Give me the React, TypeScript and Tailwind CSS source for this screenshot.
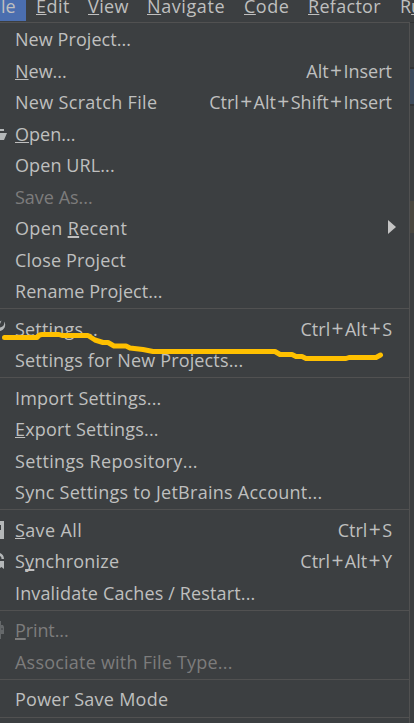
import { Fragment, type ReactNode } from "react";

type Item = {
  label: string;
  mnemonic?: number;
  shortcut?: string;
  disabled?: boolean;
  submenu?: boolean;
  icon?: ReactNode;
  tracking?: string;
  thick?: boolean;
  raised?: boolean;
};

const FolderIcon = () => (
  <svg width="8" height="16" viewBox="0 0 8 16" fill="#b4b7b8">
    <path d="M0 3h4v2H0zM0 7h7l-3 7H0z" />
  </svg>
);
const WrenchIcon = () => (
  <svg className="-mt-[4px]" width="8" height="18" viewBox="0 0 8 18" fill="#b4b7b8">
    <path d="M4.300 3.500C6.500 7.500 4.500 12 0 13V9.500L1.500 9C3.500 8.500 4.500 6.500 4.300 3.500zM0 3.500L1.500 2.500L0 6z" />
  </svg>
);
const SaveIcon = () => (
  <svg width="8" height="18" viewBox="0 0 8 18" fill="#b4b7b8">
    <path d="M0 0h4v18H0V9h1V4H0z" />
  </svg>
);
const SyncIcon = () => (
  <svg width="8" height="18" viewBox="0 0 8 18" fill="#b4b7b8">
    <path d="M0 1C2.500 2 4 4 4 7H1.500C1.500 5 1 4.500 0 4zM0 9h4v8l-2.500-2L0 16z" />
  </svg>
);
const PrintIcon = () => (
  <svg width="8" height="18" viewBox="0 0 8 18" fill="#65686a">
    <path d="M0 0h1v4h2l1 2v7H1v5H0z" />
    <path d="M1.500 7h1v2h-1z" fill="#3c3f41" />
  </svg>
);

const groups: Item[][] = [
  [
    { label: "New Project...", raised: true, tracking: "tracking-[0.07px]" },
    { label: "New...", mnemonic: 0, shortcut: "Alt+Insert" },
    { label: "New Scratch File", raised: true, shortcut: "Ctrl+Alt+Shift+Insert", tracking: "tracking-[0.31px]" },
    { label: "Open...", mnemonic: 0, icon: <FolderIcon /> },
    { label: "Open URL...", tracking: "tracking-[0.1px]" },
    { label: "Save As...", disabled: true },
    { label: "Open Recent", mnemonic: 5, submenu: true, thick: true, tracking: "tracking-[0.36px]" },
    { label: "Close Project", tracking: "tracking-[0.15px]" },
    { label: "Rename Project...", tracking: "tracking-[0.06px]" },
  ],
  [
    { label: "Settings...", shortcut: "Ctrl+Alt+S", icon: <WrenchIcon />, tracking: "tracking-[0.18px]" },
    { label: "Settings for New Projects...", tracking: "tracking-[0.15px]" },
  ],
  [
    { label: "Import Settings...", tracking: "tracking-[0.2px]" },
    { label: "Export Settings...", mnemonic: 0, tracking: "tracking-[0.17px]" },
    { label: "Settings Repository...", tracking: "tracking-[0.34px]" },
    { label: "Sync Settings to JetBrains Account...", tracking: "tracking-[0.26px]" },
  ],
  [
    { label: "Save All", mnemonic: 0, shortcut: "Ctrl+S", icon: <SaveIcon />, tracking: "tracking-[0.37px]" },
    { label: "Synchronize", mnemonic: 1, shortcut: "Ctrl+Alt+Y", icon: <SyncIcon />, thick: true, tracking: "tracking-[0.22px]" },
    { label: "Invalidate Caches / Restart...", tracking: "tracking-[0.14px]" },
  ],
  [
    { label: "Print...", mnemonic: 0, disabled: true, icon: <PrintIcon />, thick: true, tracking: "tracking-[-0.1px]" },
    { label: "Associate with File Type...", disabled: true, tracking: "tracking-[0.22px]" },
  ],
  [{ label: "Power Save Mode", raised: true, tracking: "tracking-[0.25px]" }],
];

function Label({ text, mnemonic, thick }: { text: string; mnemonic?: number; thick?: boolean }) {
  if (mnemonic === undefined) return <>{text}</>;
  return (
    <>
      {text.slice(0, mnemonic)}
      <span
        className={`underline underline-offset-[1px] [text-decoration-skip-ink:none] ${thick ? "decoration-2" : "decoration-1"}`}
      >
        {text[mnemonic]}
      </span>
      {text.slice(mnemonic + 1)}
    </>
  );
}

function Shortcut({ keys }: { keys: string }) {
  return (
    <span>
      {keys.split("+").map((key, i) => (
        <Fragment key={i}>
          {i > 0 && <span className="mx-[1.4px] text-[21px] leading-none">+</span>}
          {key}
        </Fragment>
      ))}
    </span>
  );
}

function Row({ item }: { item: Item }) {
  return (
    <div
      className={`flex h-[31.4px] items-center pr-[17px] ${item.raised ? "pt-[1.4px]" : "pt-[2.2px]"} ${item.disabled ? "text-[#7c7c7c]" : "text-[#bfbfbf]"}`}
    >
      <span className="flex w-[15px] shrink-0">{item.icon}</span>
      <span className={`grow ${item.tracking ?? ""}`}>
        <Label text={item.label} mnemonic={item.mnemonic} thick={item.thick} />
      </span>
      {item.shortcut && <Shortcut keys={item.shortcut} />}
      {item.submenu && (
        <svg className="-mt-[2px] -mr-[5px]" width="9" height="14" viewBox="0 0 9 14" fill="#c4c4c4">
          <path d="M0 0l8 7-8 7z" />
        </svg>
      )}
    </div>
  );
}

export default function App() {
  return (
    <div className="relative h-[723px] w-[414px] overflow-hidden bg-[#3c3f41] font-['Open_Sans','Noto_Sans',sans-serif] text-[18px] leading-[24px] whitespace-pre text-[#bfbfbf]">
      <nav className="flex h-[22px] w-[460px] items-start">
        <span className="flex h-[21px] w-[26px] shrink-0 bg-[#4b6eaf]"><span className="-mt-[6px] pl-[1px]">le</span></span>
        <span className="-mt-[6px] ml-[10px] w-[52px] shrink-0 tracking-[0.5px]"><Label text="Edit" mnemonic={0} /></span>
        <span className="-mt-[6px] w-[59px] shrink-0 tracking-[0.4px]"><Label text="View" mnemonic={0} /></span>
        <span className="-mt-[6px] w-[97px] shrink-0 tracking-[0.6px]"><Label text="Navigate" mnemonic={0} /></span>
        <span className="-mt-[6px] w-[64px] shrink-0 tracking-[0.5px]"><Label text="Code" mnemonic={0} /></span>
        <span className="-mt-[6px] w-[92px] shrink-0 tracking-[0.3px]"><Label text="Refactor" mnemonic={0} /></span>
        <span className="-mt-[6px] shrink-0"><Label text="Run" mnemonic={1} /></span>
      </nav>
      <div className="flex">
        <div className="h-[701px] w-[410px] shrink-0 border-t border-r border-[#515151]">
          {groups.map((group, i) => (
            <div key={i}>
              {group.map((item) => (
                <Row key={item.label} item={item} />
              ))}
              <div className="flex h-[6.4px] items-center">
                <div className="h-px w-full bg-[#515151]" />
              </div>
            </div>
          ))}
        </div>
        <div className="w-[4px]">
          <div className="h-[45px] border-t border-[#303234]" />
          <div className="h-[39px] border-y-2 border-[#323436] bg-[#3d4b5c]" />
          <div className="h-[95px]" />
          <div className="h-[32px] bg-[#49473f]" />
        </div>
      </div>
      <svg className="pointer-events-none absolute inset-0" width="414" height="723" fill="none">
        <path
          d="M4.500 337.500H37Q39 334.500 42 334.500H59L62 335.500H88L95 340L103 342.500H108L114 346H126L130 348L143 349.500L153 351.500H275L280 354.500H292L296 356.500H302L306 358.500H346L349 357.500H376L380.500 355"
          stroke="#ffc000"
          strokeWidth="5"
          strokeLinecap="round"
          strokeLinejoin="round"
        />
      </svg>
    </div>
  );
}
